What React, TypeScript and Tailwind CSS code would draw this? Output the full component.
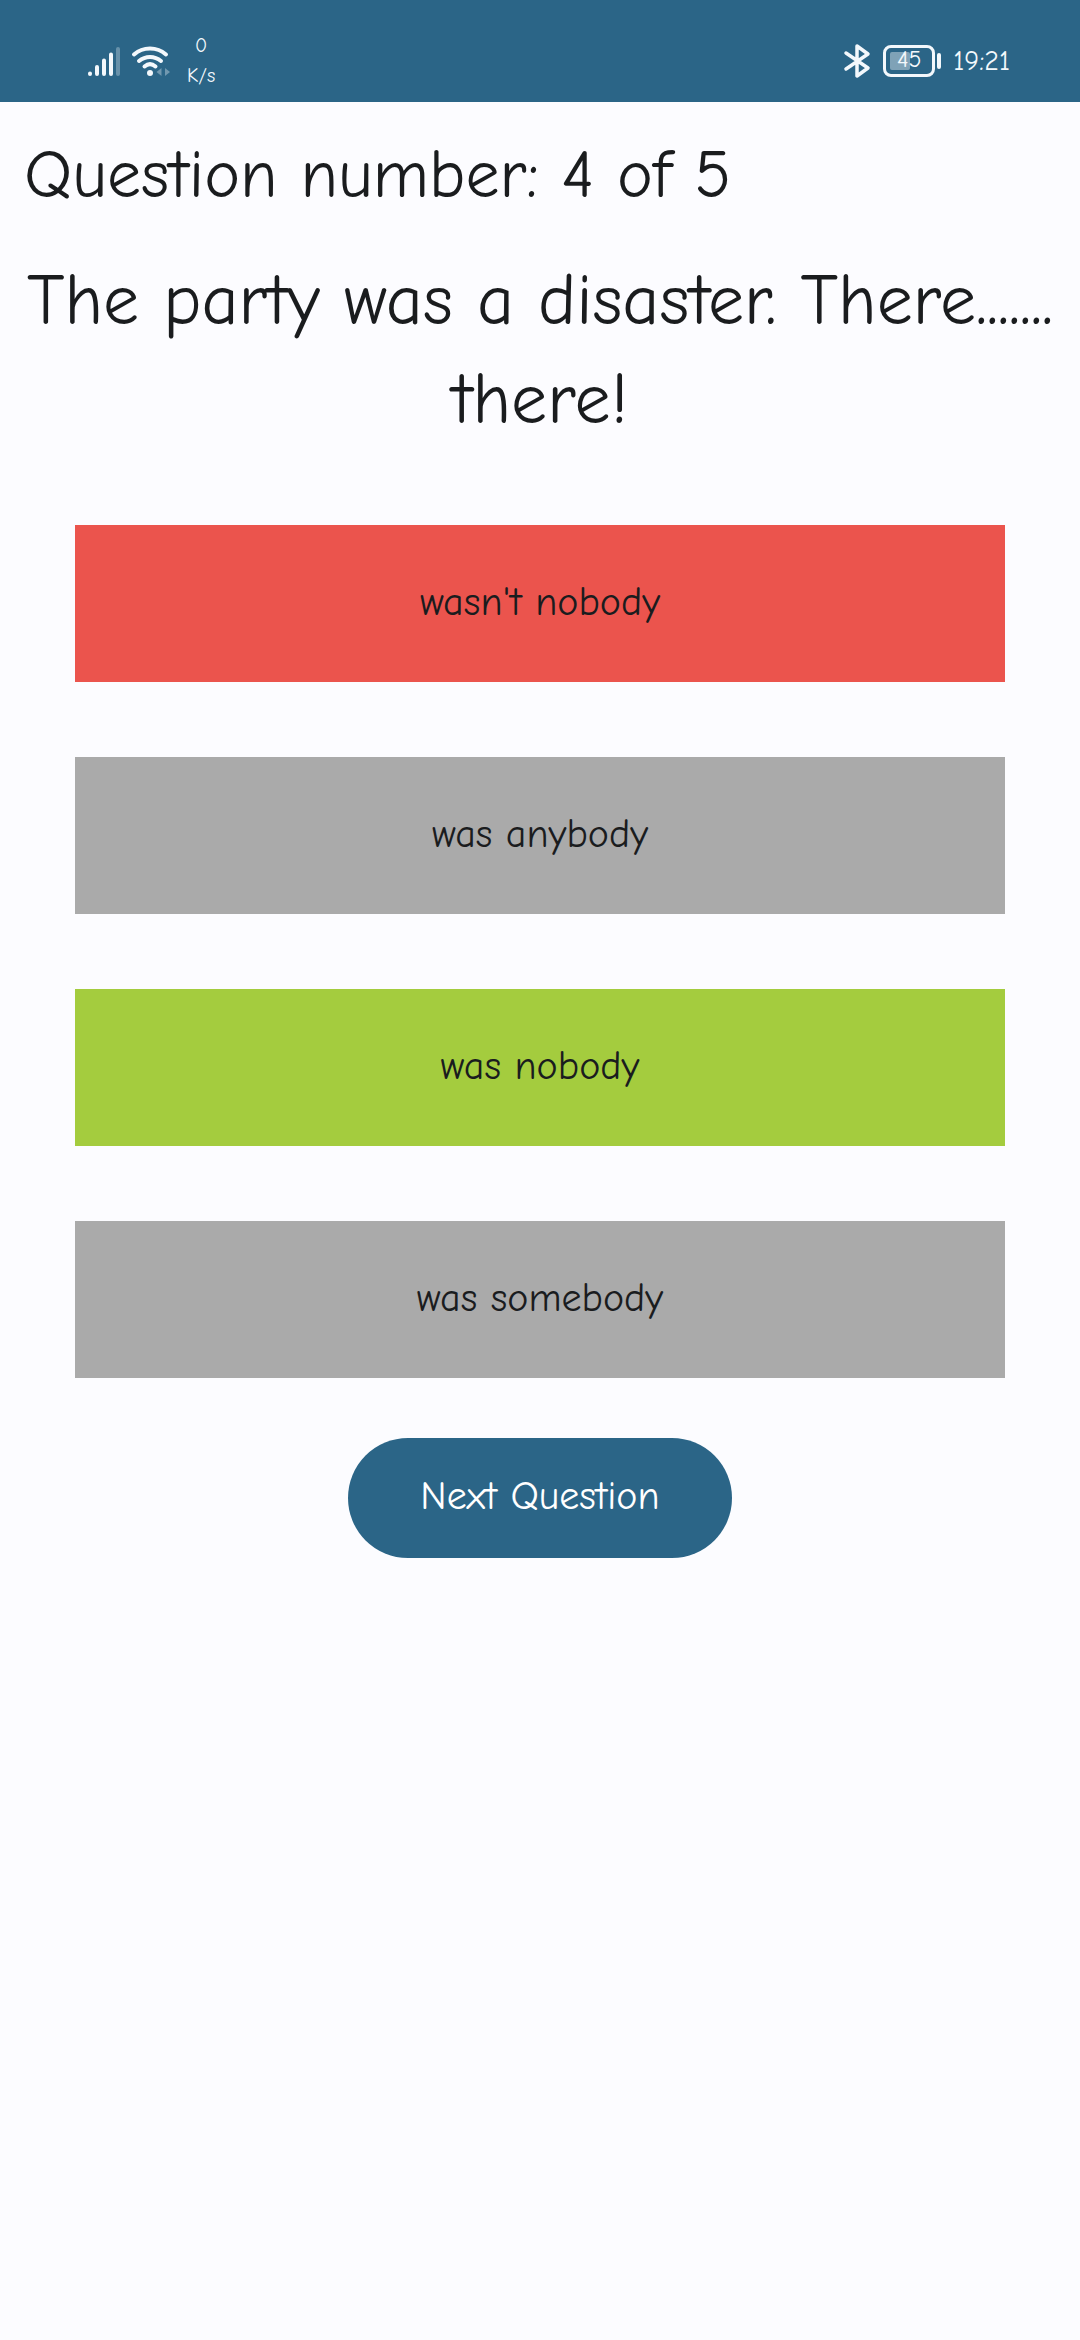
const answers = [
  { text: "wasn't nobody", tone: "bg-[#eb544d]" },
  { text: "was anybody", tone: "bg-[#aaaaaa]" },
  { text: "was nobody", tone: "bg-[#a4cc3e]" },
  { text: "was somebody", tone: "bg-[#aaaaaa]" },
];

function SignalIcon() {
  return (
    <svg className="h-8 w-9" viewBox="0 0 36 32" fill="none" stroke="#f3f8fc" strokeWidth="4" strokeLinecap="round" aria-label="Mobile signal">
      <path d="M3 28.5V29M10 22v7M17 15.5V29M24 9.500V29" />
      <path d="M31 4v25" opacity="0.3" />
    </svg>
  );
}

function WifiIcon() {
  return (
    <svg className="h-8 w-10" viewBox="0 0 40 32" fill="none" stroke="#f3f8fc" strokeWidth="4" strokeLinecap="round" aria-label="Wi-Fi">
      <path d="M3 9.500C12 1.500 26 1.500 35 9.500M8 16C14.500 10.500 23.500 10.500 30 16M13.500 21.500C17 18.500 21 18.500 24.500 21.500" />
      <circle cx="19" cy="28" r="3" fill="#f3f8fc" stroke="none" />
      <path d="M25.500 27l5-4v8zM39 27l-5-4v8z" fill="#f3f8fc" stroke="none" opacity="0.35" />
    </svg>
  );
}

function BluetoothIcon() {
  return (
    <svg className="h-9 w-7" viewBox="0 0 28 36" fill="none" stroke="#f3f8fc" strokeWidth="3.500" strokeLinecap="round" strokeLinejoin="round" aria-label="Bluetooth">
      <path d="M3 10l22 15-11 8V3l11 8L3 26" />
    </svg>
  );
}

function Battery() {
  return (
    <div className="flex items-center gap-0.5">
      <div className="relative flex h-8 w-13 items-center justify-center rounded-lg border-3 border-[#f3f8fc] pb-1">
        <span className="absolute inset-y-1 left-1 w-5 rounded-xs bg-white/40" />
        <span className="relative text-[24px] leading-none">45</span>
      </div>
      <span className="h-4 w-1 rounded-full bg-[#f3f8fc]" />
    </div>
  );
}

export default function App() {
  return (
    <div className="min-h-screen bg-[#fcfcff] font-['Comic_Neue','Open_Sans',sans-serif] text-[#1a1c1e] [font-variant-ligatures:none]">
      <header className="flex h-[102px] items-center justify-between bg-[#2b6587] pt-5 pr-[70px] pl-[87px] text-[#f3f8fc]">
        <div className="flex items-center">
          <SignalIcon />
          <div className="ml-2">
            <WifiIcon />
          </div>
          <div className="ml-4 flex flex-col text-center text-xl leading-[30px]">
            <span>0</span>
            <span>K/s</span>
          </div>
        </div>
        <div className="flex items-center gap-3">
          <BluetoothIcon />
          <Battery />
          <time className="text-[28px] leading-none">19:21</time>
        </div>
      </header>

      <main className="flex flex-col pt-6">
        <h2 className="px-6 text-[68px] leading-[99px]">Question number: 4 of 5</h2>
        <h1 className="mt-[26px] text-center text-[72px] leading-[99px]">The party was a disaster. There....... there!</h1>

        <div className="mt-[76px] flex flex-col gap-[75px] px-[75px]">
          {answers.map(({ text, tone }) => (
            <button key={text} type="button" className={`h-[157px] w-full pb-1 text-[40px] ${tone}`}>
              {text}
            </button>
          ))}
        </div>

        <button type="button" className="mt-[60px] h-[120px] self-center rounded-full bg-[#2b6587] px-[72px] pb-1 text-[40px] text-white">
          Next Question
        </button>
      </main>
    </div>
  );
}
